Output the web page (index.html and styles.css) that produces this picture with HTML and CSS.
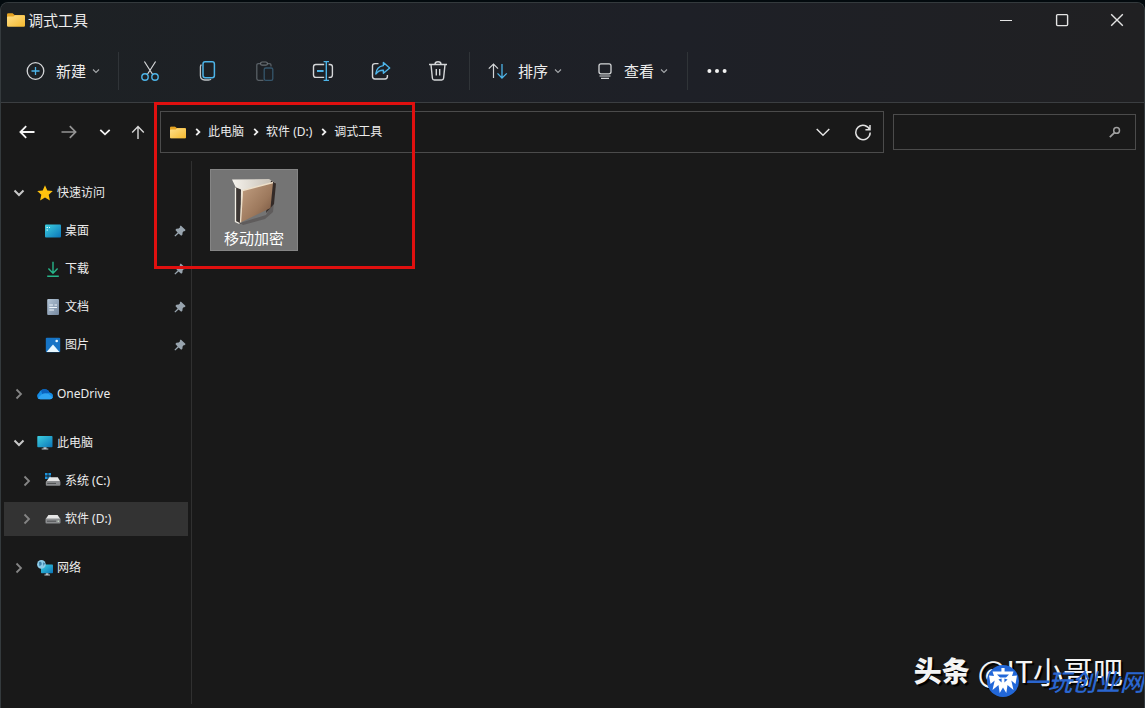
FILE: index.html
```html
<!DOCTYPE html>
<html lang="zh-CN">
<head>
<meta charset="utf-8">
<title>调式工具</title>
<link rel="stylesheet" href="styles.css">
</head>
<body>
<svg class="defs" width="0" height="0" aria-hidden="true">
  <defs>
    <linearGradient id="gold" x1="0" y1="0" x2="1" y2="1"><stop offset="0" stop-color="#ffe08a"/><stop offset="1" stop-color="#f5b92e"/></linearGradient>
    <linearGradient id="sky" x1="0" y1="0" x2="1" y2="1"><stop offset="0" stop-color="#3ed0e0"/><stop offset="1" stop-color="#0a74b8"/></linearGradient>
    <linearGradient id="paper" x1="0" y1="0" x2="1" y2="1"><stop offset="0" stop-color="#b4c6d8"/><stop offset="1" stop-color="#74879e"/></linearGradient>
    <linearGradient id="tan" x1="0" y1="0" x2="1" y2="1"><stop offset="0" stop-color="#c4a183"/><stop offset="0.6" stop-color="#9c785c"/><stop offset="1" stop-color="#6c4c38"/></linearGradient>
    <linearGradient id="sheet" x1="0" y1="0" x2="1" y2="0"><stop offset="0" stop-color="#f5f2ec"/><stop offset="1" stop-color="#c4bdb2"/></linearGradient>
    <symbol id="folder" viewBox="0 0 18 14"><path d="M0 1.6Q0 .2 1.4.2H5.6L7.6 2H16.6Q18 2 18 3.4V7H0z" fill="#e5a321"/><path d="M0 4.6Q0 3.6 1 3.6H6.4L8 2.2H16.8Q18 2.2 18 3.4V12.6Q18 13.8 16.8 13.8H1.2Q0 13.8 0 12.6z" fill="url(#gold)"/></symbol>
    <symbol id="small-down" viewBox="0 0 8 8"><path d="M1 2.5 4 5.5 7 2.5" fill="none" stroke="#a5a8ab" stroke-width="1.1"/></symbol>
    <symbol id="open" viewBox="0 0 12 12"><path d="M1.5 3.5 6 8 10.5 3.5" fill="none" stroke="#c8c8c8" stroke-width="2"/></symbol>
    <symbol id="closed" viewBox="0 0 12 12"><path d="M3.5 1.5 8 6 3.5 10.5" fill="none" stroke="#858585" stroke-width="1.8"/></symbol>
    <symbol id="crumb" viewBox="0 0 8 10"><path d="M2.2 1.8 5.4 5 2.2 8.2" fill="none" stroke="#f0f0f0" stroke-width="1.8"/></symbol>
    <symbol id="pin" viewBox="0 0 12 12"><path d="M6.8.4 11.6 5 10.6 6.2 9.9 6 8.6 7.4 8.4 9.8 7.2 10.8 4.6 8.4 1.3 11.6.4 10.7 3.6 7.4 1.4 5 2.4 3.8 4.7 3.6 6.1 2.3 5.8 1.4z" fill="#98a4ae"/></symbol>
    <symbol id="drive" viewBox="0 0 16 12"><path d="M3.4 2H12.6L15.3 6H.7z" fill="#e6e6e6"/><rect x=".5" y="5.6" width="15" height="5" rx="1" fill="#8b8d8f"/><path d="M2 8.2H11" stroke="#4c4e50"/><path d="M12.6 8.2h1.4" stroke="#d8f0d8"/></symbol>
  </defs>
</svg>
<div class="window">
  <header class="chrome">
    <div class="titlebar">
      <svg class="title-icon" viewBox="0 0 18 14"><use href="#folder"/></svg>
      <h1 class="title">调式工具</h1>
      <div class="captions">
        <button class="caption" aria-label="最小化"><svg width="14" height="14" viewBox="0 0 14 14"><path d="M1 7.5H13" stroke="#e4e4e4" stroke-width="1.2"/></svg></button>
        <button class="caption" aria-label="最大化"><svg width="14" height="14" viewBox="0 0 14 14"><rect x="1.6" y="1.6" width="11" height="11" rx="1" fill="none" stroke="#e4e4e4" stroke-width="1.4"/></svg></button>
        <button class="caption" aria-label="关闭"><svg width="14" height="14" viewBox="0 0 14 14"><path d="M1.2 1.2 12.8 12.8M12.8 1.2 1.2 12.8" stroke="#e4e4e4" stroke-width="1.4"/></svg></button>
      </div>
    </div>
    <div class="ribbon">
      <button class="command">
        <svg width="20" height="20" viewBox="0 0 20 20" fill="none"><circle cx="9.5" cy="10" r="8.3" stroke="#d4d6d8" stroke-width="1.3"/><path d="M9.5 6V14M5.5 10H13.5" stroke="#4db4e8" stroke-width="1.3"/></svg>
        <span>新建</span>
        <svg class="tiny"><use href="#small-down"/></svg>
      </button>
      <span class="divider"></span>
      <div class="tools">
        <button class="tool" aria-label="剪切"><svg width="22" height="22" viewBox="0 0 22 22" fill="none"><path d="M5.4 1.5 14 15M16.6 1.5 8 15" stroke="#d4d6d8" stroke-width="1.2"/><circle cx="6" cy="17" r="3.2" stroke="#4db4e8" stroke-width="1.4"/><circle cx="16" cy="17" r="3.2" stroke="#4db4e8" stroke-width="1.4"/></svg></button>
        <button class="tool" aria-label="复制"><svg width="22" height="22" viewBox="0 0 22 22" fill="none"><path d="M4.4 4.6Q3.4 5.3 3.4 7V15.6Q3.4 20 7.8 20H11.5Q13.4 20 14 19" stroke="#bfc3c6" stroke-width="1.3"/><rect x="6" y="1.7" width="11.4" height="16" rx="2.2" stroke="#4db4e8" stroke-width="1.5"/></svg></button>
        <button class="tool" aria-label="粘贴" disabled><svg width="22" height="22" viewBox="0 0 22 22" fill="none"><path d="M7 3.6H4.5Q2.8 3.6 2.8 5.3V18.5Q2.8 20.3 4.5 20.3H9.5M13 3.6H15.4Q17 3.6 17 5V6.5" stroke="#596066" stroke-width="1.3"/><rect x="6.6" y="2" width="6.8" height="3.2" rx="1.5" stroke="#6a7075" stroke-width="1.2"/><rect x="10.2" y="8" width="8.6" height="12.3" rx="1.6" stroke="#35566c" stroke-width="1.3"/></svg></button>
        <button class="tool" aria-label="重命名"><svg width="22" height="22" viewBox="0 0 22 22" fill="none"><path d="M12.2 4.5H3.8Q1.5 4.5 1.5 6.8V15Q1.5 17.4 3.8 17.4H12.2M16.6 4.5H18Q20.4 4.5 20.4 6.8V15Q20.4 17.4 18 17.4H16.6" stroke="#d4d6d8" stroke-width="1.4"/><path d="M5 11H11.6" stroke="#4db4e8" stroke-width="2"/><path d="M11.6 1.6H17M11.6 20.4H17M14.3 1.6V20.4" stroke="#4db4e8" stroke-width="1.4"/></svg></button>
        <button class="tool" aria-label="共享"><svg width="22" height="22" viewBox="0 0 22 22" fill="none"><path d="M8.5 3.6H5Q2.5 3.6 2.5 6V16.6Q2.5 19 5 19H15Q17.4 19 17.4 16.6V15" stroke="#d4d6d8" stroke-width="1.4"/><path d="M13.4 2.5 19.7 8 13.4 13.3V10.3Q8.8 10 5.8 14 6.4 6.6 13.4 5.6z" stroke="#4db4e8" stroke-width="1.4" stroke-linejoin="round"/></svg></button>
        <button class="tool" aria-label="删除"><svg width="22" height="22" viewBox="0 0 22 22" fill="none"><path d="M2 4.5H20M8 4.3Q8 1.7 11 1.7T14 4.3M4 4.6 5.4 18.2Q5.6 20 7.3 20H14.7Q16.4 20 16.6 18.2L18 4.6M9.3 9V15.5M12.7 9V15.5" stroke="#d4d6d8" stroke-width="1.4"/></svg></button>
      </div>
      <span class="divider"></span>
      <button class="command sort">
        <svg width="20" height="20" viewBox="0 0 20 20" fill="none"><path d="M5.5 17V3M.8 7.7 5.5 3 10 7.7" stroke="#d4d6d8" stroke-width="1.2"/><path d="M14 3V17M9.5 12.4 14 17 18.8 12.4" stroke="#4db4e8" stroke-width="1.3"/></svg>
        <span>排序</span>
        <svg class="tiny"><use href="#small-down"/></svg>
      </button>
      <button class="command view">
        <svg width="20" height="20" viewBox="0 0 20 20" fill="none"><rect x="5" y="2.8" width="12" height="10" rx="2" stroke="#d4d6d8" stroke-width="1.3"/><path d="M5.5 15H16.5M7 17.4H15" stroke="#d4d6d8" stroke-width="1.2"/></svg>
        <span>查看</span>
        <svg class="tiny"><use href="#small-down"/></svg>
      </button>
      <span class="divider"></span>
      <button class="more" aria-label="更多"><svg width="20" height="20" viewBox="0 0 20 20" fill="#f2f2f2"><circle cx="2.4" cy="10" r="2"/><circle cx="10" cy="10" r="2"/><circle cx="17.6" cy="10" r="2"/></svg></button>
    </div>
  </header>

  <nav class="navigation">
    <div class="history">
      <button class="step" aria-label="后退"><svg width="18" height="18" viewBox="0 0 18 18" fill="none" stroke="#f4f4f4" stroke-width="1.8"><path d="M16.5 9H2.5M8.2 3.2 2.4 9 8.2 14.8"/></svg></button>
      <button class="step" aria-label="前进"><svg width="18" height="18" viewBox="0 0 18 18" fill="none" stroke="#949494" stroke-width="1.7"><path d="M1.5 9H15.5M9.8 3.2 15.6 9 9.8 14.8"/></svg></button>
      <button class="step narrow" aria-label="最近"><svg width="12" height="12" viewBox="0 0 12 12" fill="none" stroke="#f0f0f0" stroke-width="1.8"><path d="M1.3 3.8 6 8.3 10.7 3.8"/></svg></button>
      <button class="step up" aria-label="向上"><svg width="16" height="16" viewBox="0 0 16 16" fill="none" stroke="#d8d8d8" stroke-width="1.4"><path d="M8 15V3M2.2 8.4 8 2.6 13.8 8.4"/></svg></button>
    </div>
    <div class="address">
      <svg class="address-icon" viewBox="0 0 18 14"><use href="#folder"/></svg>
      <svg class="sep"><use href="#crumb"/></svg>
      <a class="crumb" href="#">此电脑</a>
      <svg class="sep"><use href="#crumb"/></svg>
      <a class="crumb" href="#">软件 (D:)</a>
      <svg class="sep"><use href="#crumb"/></svg>
      <a class="crumb" href="#">调式工具</a>
      <button class="address-button drop" aria-label="历史记录"><svg width="16" height="16" viewBox="0 0 16 16" fill="none" stroke="#e0e0e0" stroke-width="1.5"><path d="M1.7 5 8 11.2 14.3 5"/></svg></button>
      <button class="address-button" aria-label="刷新"><svg width="18" height="18" viewBox="0 0 18 18" fill="none" stroke="#e0e0e0" stroke-width="1.5"><path d="M15.8 7.1A7.2 7.2 0 1 0 16.2 9.6M16 2V6.8H11.4"/></svg></button>
    </div>
    <label class="search">
      <input class="search-input" type="search" aria-label="搜索">
      <svg width="12" height="12" viewBox="0 0 12 12" fill="none" stroke="#a0a0a0"><circle cx="7.6" cy="4.4" r="2.9" stroke-width="1.5"/><path d="M5.5 6.6.8 11.2" stroke-width="1.8"/></svg>
    </label>
  </nav>

  <div class="body">
    <aside class="sidebar">
      <ul class="group">
        <li class="row"><svg class="twist"><use href="#open"/></svg><svg class="icon" viewBox="0 0 16 16"><path d="M8 .3 10.3 5.4 15.8 6 11.7 9.8 12.9 15.5 8 12.6 3.1 15.5 4.3 9.8.2 6 5.7 5.4z" fill="#ffc20e"/></svg><a class="name" href="#">快速访问</a></li>
        <li class="row child"><svg class="icon" viewBox="0 0 16 16"><rect x="0" y="1.5" width="16" height="13" rx="1" fill="url(#sky)"/><path d="M1.5 4.5h1.5M4 4.5h1M1.5 7h1.5" stroke="#d8ffff" stroke-width="1.2"/></svg><a class="name" href="#">桌面</a><svg class="pin"><use href="#pin"/></svg></li>
        <li class="row child"><svg class="icon" viewBox="0 0 16 16" fill="none" stroke="#27b58a" stroke-width="1.4"><path d="M8 .8V12M3.4 7.6 8 12.2 12.6 7.6M2.2 15.2H13.8"/></svg><a class="name" href="#">下载</a><svg class="pin"><use href="#pin"/></svg></li>
        <li class="row child"><svg class="icon" viewBox="0 0 16 16"><rect x="2.2" y="0" width="11.8" height="16" rx="1" fill="url(#paper)"/><path d="M4.3 6H8M9.5 6h2.5M4.3 8.5H12M4.3 11H9" stroke="#edf4fa"/></svg><a class="name" href="#">文档</a><svg class="pin"><use href="#pin"/></svg></li>
        <li class="row child"><svg class="icon" viewBox="0 0 16 16"><rect x=".8" y=".8" width="14.4" height="14.4" rx="1" fill="#1674c6"/><path d="M1.5 15 8 7.5 14.5 15z" fill="#e7f7ff"/><circle cx="11.7" cy="4" r="1.3" fill="#e7f7ff"/></svg><a class="name" href="#">图片</a><svg class="pin"><use href="#pin"/></svg></li>
      </ul>
      <ul class="group">
        <li class="row"><svg class="twist"><use href="#closed"/></svg><svg class="icon" viewBox="0 0 16 16"><path d="M1 12.5Q-1.2 9 2 6.8 3.5 3 7.5 3.2 11 3.2 12.5 6.4 16 7 16 10 16 13 13 13.2H3.5Q1.8 13.2 1 12.5z" fill="#148be4"/><path d="M4 4.5Q8 1.2 11.5 4.8L12.5 6.5 6 10z" fill="#0b62bd"/><path d="M1 12.5Q5 6 11 7.6L15.8 11.4Q15 13.2 13 13.2H3.5Q1.8 13.2 1 12.5z" fill="#2ea3f2"/></svg><a class="name" href="#">OneDrive</a></li>
      </ul>
      <ul class="group">
        <li class="row"><svg class="twist"><use href="#open"/></svg><svg class="icon" viewBox="0 0 16 16"><rect x=".3" y="1" width="15.2" height="11.3" rx=".8" fill="url(#sky)"/><path d="M6.5 12.3h3V13.6h1.8V14.6H4.7V13.6H6.5z" fill="#b9c4ca"/></svg><a class="name" href="#">此电脑</a></li>
        <li class="row child"><svg class="twist"><use href="#closed"/></svg><svg class="icon" viewBox="0 0 16 16"><path d="M0 0h2.6v2.6H0zM3.4 0H6v2.6H3.4zM0 3.4h2.6V6H0zM3.4 3.4H6V6H3.4z" fill="#1c93dd"/><path d="M4.5 4.2H12.8L15.2 8.2H1.5z" fill="#e6e6e6"/><rect x=".8" y="8" width="14.6" height="4.8" rx="1" fill="#8b8d8f"/><path d="M2.2 10.4H11" stroke="#4c4e50"/></svg><a class="name" href="#">系统 (C:)</a></li>
        <li class="row child selected"><svg class="twist"><use href="#closed"/></svg><svg class="icon"><use href="#drive"/></svg><a class="name" href="#">软件 (D:)</a></li>
      </ul>
      <ul class="group">
        <li class="row"><svg class="twist"><use href="#closed"/></svg><svg class="icon" viewBox="0 0 16 16"><rect x="4" y="4.5" width="12" height="8.8" rx=".8" fill="url(#sky)"/><path d="M8.8 13.2h2.6V14.6H13V15.6H7.4V14.6H8.8z" fill="#b9c4ca"/><circle cx="4.4" cy="4.4" r="4.3" fill="#8ccbe8"/><path d="M2 2.2Q4 .8 4.6 3T2.4 6.2zM6 2.2 8 3.5 6.4 6z" fill="#3a7ea6"/></svg><a class="name" href="#">网络</a></li>
      </ul>
    </aside>
    <main class="files">
      <button class="file">
        <svg width="52" height="50" viewBox="0 0 52 50"><path d="M12 46 38 38 46 24 45 35 37 42 15 48z" fill="#4a4443" opacity=".5"/><path d="M4 2.5 41 2 47.5 6 45 26 9 45 8.5 12z" fill="url(#sheet)"/><path d="M43 3.5 48 6.5 46 27 38 36z" fill="#332a27"/><path d="M7 10 13 12.5 12.5 47 8 44.5z" fill="#3d3734"/><path d="M7.5 10.5V44.5L11.5 46.5" fill="none" stroke="#f2eee5" stroke-width="1.3"/><path d="M14.5 13.5 45 5.5 42.5 31 12.5 45.5z" fill="url(#tan)"/><path d="M12.5 45.5 14.5 13.5 45 5.5" fill="none" stroke="#eddfc9" stroke-width="1.3"/></svg>
        <span class="file-name">移动加密</span>
      </button>
    </main>
  </div>
  <div class="highlight"></div>
  <div class="credit"><b class="credit-brand">头条</b><span>@IT小哥吧</span></div>
  <div class="stamp">
    <svg width="34" height="34" viewBox="0 0 34 34"><circle cx="17" cy="17" r="16" fill="#2267d8"/><path d="M15.4 4H18.6V7.4H27.5L26 12 31 11.5 29.5 20 25.3 16.5 27.5 26 21.5 21 20.3 29 17 23.5 13.7 29 12.5 21 6.5 26 8.7 16.5 4.5 20 3 11.5 8 12 6.5 7.4H15.4z" fill="#fff"/><path d="M11 10.6H23L20 13.4H14zM12.4 15.6 15.6 14.6V18.6zM21.6 15.6 18.4 14.6V18.6z" fill="#2267d8"/></svg>
    <span>一玩创业网</span>
  </div>
</div>
</body>
</html>
```
FILE: styles.css
```css
* {
  box-sizing: border-box;
}

body {
  margin: 0;
  padding-top: 2px;
  background: #030a0e;
  color: #ececec;
  font-family: "Noto Sans", "Noto Sans CJK SC", sans-serif;
  font-size: 12px;
  line-height: 16px;
}

button {
  display: flex;
  align-items: center;
  justify-content: center;
  padding: 0;
  border: 0;
  background: none;
  color: inherit;
  font: inherit;
}

a {
  color: inherit;
  text-decoration: none;
}

svg {
  display: block;
  flex: none;
}

.defs {
  position: absolute;
}

.window {
  position: relative;
  display: flex;
  flex-direction: column;
  min-height: calc(100vh - 2px);
  overflow: hidden;
  border: 1px solid #343a3d;
  border-bottom: 0;
  border-radius: 8px 8px 0 0;
  background: #191919;
}

.chrome {
  border-bottom: 1px solid #3b3e41;
  background: linear-gradient(90deg, #1d2124, #1e2027 60%, #202022);
}

.titlebar {
  display: flex;
  align-items: center;
  height: 34px;
  padding-left: 6px;
}

.title-icon {
  width: 18px;
  height: 14px;
}

.title {
  flex: 1;
  margin: 0 0 0 3px;
  font-size: 15px;
  font-weight: 400;
  line-height: 20px;
}

.captions {
  display: flex;
}

.caption {
  width: 56px;
  height: 34px;
}

.caption:last-child {
  width: 54px;
}

.ribbon {
  display: flex;
  align-items: center;
  height: 65px;
  padding: 2px 25px 0;
}

.command {
  gap: 10px;
  font-size: 15px;
  line-height: 20px;
}

.tiny {
  width: 8px;
  height: 8px;
  margin-left: -4px;
}

.divider {
  width: 1px;
  height: 38px;
  margin: 0 2px;
  background: #303438;
}

.command + .divider {
  margin-left: 18px;
}

.tools {
  display: flex;
  width: 346px;
}

.tool {
  flex: 1;
  height: 36px;
}

.sort {
  margin-left: 16px;
}

.view {
  margin-left: 32px;
}

.view + .divider {
  margin-left: 19px;
}

.more {
  margin-left: 17px;
}

.navigation {
  display: flex;
  align-items: center;
  height: 58px;
  padding-right: 8px;
}

.history {
  display: flex;
  width: 159px;
  padding-left: 5px;
}

.step {
  width: 42px;
  height: 36px;
}

.narrow {
  width: 30px;
}

.up {
  width: 36px;
}

.address {
  display: flex;
  flex: 1;
  align-items: center;
  height: 42px;
  padding: 0 11px 0 9px;
  border: 1px solid #4b4b4b;
}

.address-icon {
  width: 16px;
  height: 13px;
}

.sep {
  width: 8px;
  height: 10px;
  margin: 0 6px 0 8px;
}

.crumb {
  white-space: nowrap;
}

.address-button {
  width: 18px;
  height: 30px;
}

.drop {
  margin: 0 22px 0 auto;
}

.search {
  display: flex;
  flex: 0 1 243px;
  align-items: center;
  height: 36px;
  margin-left: 9px;
  padding-right: 14px;
  border: 1px solid #4b4b4b;
}

.search-input {
  flex: 1;
  min-width: 0;
  padding: 0 10px;
  border: 0;
  outline: 0;
  background: none;
  color: inherit;
  font: inherit;
}

.body {
  display: flex;
  flex: 1;
  padding-bottom: 4px;
}

.sidebar {
  width: 191px;
  padding: 15px 3px 0 3px;
  border-right: 1px solid #303030;
}

.group {
  display: flex;
  flex-direction: column;
  gap: 4px;
  margin: 0 0 15px;
  padding: 0;
  list-style: none;
}

.row {
  display: flex;
  align-items: center;
  height: 34px;
  padding: 0 2px 0 9px;
}

.child {
  padding-left: 17px;
}

.selected {
  background: #333333;
}

.twist {
  width: 12px;
  height: 12px;
}

.icon {
  width: 16px;
  height: 16px;
  margin: 0 4px 0 auto;
}

.twist + .icon {
  margin-left: 12px;
}

.row > .icon:first-child {
  margin-left: 24px;
}

.name {
  flex: 1;
}

.pin {
  width: 12px;
  height: 12px;
}

.files {
  flex: 1;
  padding: 8px 18px;
}

.file {
  flex-direction: column;
  width: 88px;
  height: 82px;
  padding: 5px 0 0;
  border: 1px solid #858585;
  background: #747474;
  color: #ffffff;
}

.file-name {
  font-size: 15px;
  line-height: 22px;
}

.highlight {
  position: absolute;
  top: 99px;
  left: 153px;
  width: 261px;
  height: 167px;
  border: 3px solid #e0100f;
  pointer-events: none;
}

.credit {
  position: absolute;
  right: 21px;
  bottom: 18px;
  display: flex;
  align-items: center;
  gap: 8px;
  color: #f4f4f4;
  font-family: "Noto Sans CJK SC", sans-serif;
  font-size: 30px;
  font-weight: 400;
  line-height: 40px;
  text-shadow: 2px 2px 1px #000000;
}

.credit-brand {
  font-size: 28px;
  font-weight: 900;
}

.stamp {
  position: absolute;
  right: 0;
  bottom: 10px;
  display: flex;
  align-items: center;
  gap: 4px;
  color: #2a66cf;
  font-family: "Noto Sans CJK SC", sans-serif;
  font-size: 24px;
  font-style: italic;
  font-weight: 500;
  line-height: 34px;
}
```
